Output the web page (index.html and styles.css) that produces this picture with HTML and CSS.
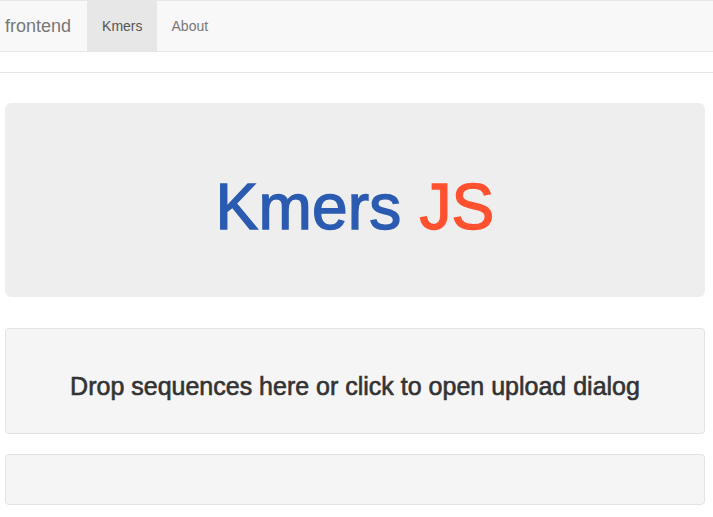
FILE: index.html
```html
<!DOCTYPE html>
<html>
<head>
<meta charset="utf-8">
<link rel="stylesheet" href="styles.css">
</head>
<body>
<nav class="navbar">
  <a class="brand">frontend</a>
  <ul class="nav">
    <li class="nav-item active">Kmers</li>
    <li class="nav-item">About</li>
  </ul>
</nav>
<hr class="rule">
<main class="page">
  <section class="jumbotron">
    <h1 class="title"><span class="kmers">Kmers</span> <span class="js">JS</span></h1>
  </section>
  <section class="dropzone">
    <h3 class="drop-text">Drop sequences here or click to open upload dialog</h3>
  </section>
  <section class="well"></section>
</main>
</body>
</html>
```

FILE: styles.css
```css
* { box-sizing: border-box; }
html, body { margin: 0; padding: 0; background: #fff; }
body {
  font-family: "Liberation Sans", Arial, Helvetica, sans-serif;
  color: #333;
  font-size: 14px;
  line-height: 1.42857;
}
.navbar {
  display: flex;
  align-items: stretch;
  height: 52px;
  background: #f8f8f8;
  border-top: 1px solid #e7e7e7;
  border-bottom: 1px solid #e7e7e7;
}
.brand {
  padding: 0 16px 0 5px;
  font-size: 18px;
  line-height: 50px;
  color: #777;
}
.nav {
  display: flex;
  list-style: none;
  margin: 0;
  padding: 0;
}
.nav-item {
  padding: 0 14px 0 15px;
  line-height: 50px;
  font-size: 14px;
  color: #777;
}
.nav-item.active {
  background: #e7e7e7;
  color: #555;
}
.rule {
  margin: 20px 0 0;
  border: 0;
  border-top: 1px solid #e5e5e5;
  height: 0;
}
.page {
  padding: 30px 8px 0 5px;
}
.jumbotron {
  height: 194px;
  background: #eee;
  border-radius: 6px;
  display: flex;
  align-items: center;
  justify-content: center;
  padding-top: 14px;
}
.title {
  margin: 0;
  font-size: 64px;
  font-weight: 500;
  line-height: 1.1;
  -webkit-text-stroke: 1.4px;
  letter-spacing: 0.2px;
}
.kmers { color: #2b5bb1; }
.js { color: #ff512f; }
.dropzone {
  margin-top: 31px;
  height: 106px;
  background: #f5f5f5;
  border: 1px solid #e3e3e3;
  border-radius: 4px;
  display: flex;
  align-items: center;
  justify-content: center;
  padding-top: 11px;
}
.drop-text {
  margin: 0;
  font-size: 25px;
  font-weight: 500;
  color: #333;
  line-height: 1.1;
  -webkit-text-stroke: 0.6px;
}
.well {
  margin-top: 20px;
  height: 51px;
  background: #f5f5f5;
  border: 1px solid #e3e3e3;
  border-radius: 4px;
}
```
